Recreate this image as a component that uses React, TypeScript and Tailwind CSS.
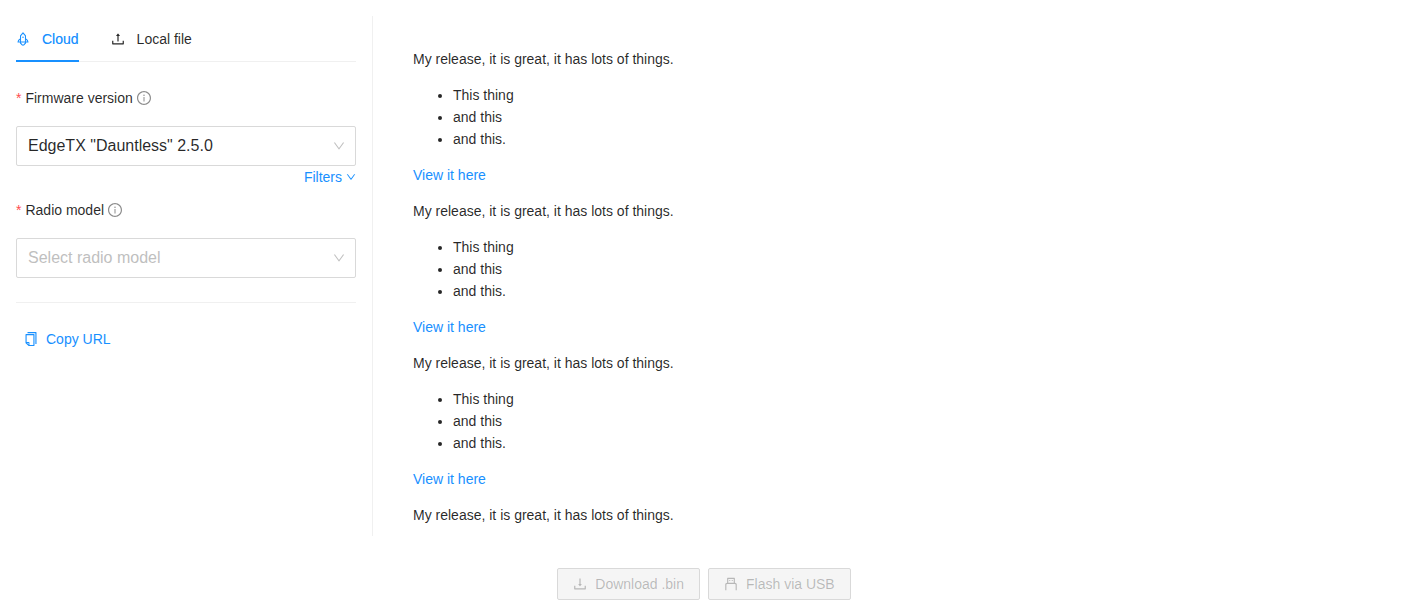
import type { ReactNode } from "react";
import {
  AiOutlineCopy,
  AiOutlineDown,
  AiOutlineDownload,
  AiOutlineInfoCircle,
  AiOutlineRocket,
  AiOutlineUpload,
  AiOutlineUsb,
} from "react-icons/ai";

// Trims the icon set's built-in margin so the glyph fills its box.
const tight = { viewBox: "64 64 896 896" };

function FieldLabel({ children }: { children: ReactNode }) {
  return (
    <label className="flex h-[22px] items-center">
      <span className="mr-1 leading-none text-[#ff4d4f]">*</span>
      {children}
      <AiOutlineInfoCircle {...tight} className="ml-1 size-3.5 text-black/45" />
    </label>
  );
}

function SelectBox({ value, placeholder }: { value?: string; placeholder?: string }) {
  return (
    <div className="flex h-10 items-center justify-between rounded-[2px] border border-[#d9d9d9] bg-white pr-2.5 pl-[11px] text-base">
      <span className={value ? "" : "text-[#bfbfbf]"}>{value ?? placeholder}</span>
      <AiOutlineDown {...tight} className="size-3 text-black/25" />
    </div>
  );
}

function ActionButton({ icon, children }: { icon: ReactNode; children: ReactNode }) {
  return (
    <button
      disabled
      className="flex h-8 items-center gap-2 rounded-[2px] border border-[#d9d9d9] bg-[#f5f5f5] px-[15px] text-black/25"
    >
      {icon}
      <span>{children}</span>
    </button>
  );
}

function ReleaseIntro() {
  return <p className="mb-3.5">My release, it is great, it has lots of things.</p>;
}

function ReleaseNote() {
  return (
    <>
      <ReleaseIntro />
      <ul className="mb-3.5 list-disc pl-10">
        <li>This thing</li>
        <li>and this</li>
        <li>and this.</li>
      </ul>
      <p className="mb-3.5">
        <a href="#" className="text-[#1890ff]">View it here</a>
      </p>
    </>
  );
}

export default function App() {
  return (
    <div className="flex h-[600px] flex-col overflow-hidden bg-white pt-4 font-['Liberation_Sans',Arial,sans-serif] text-sm leading-[22px] text-black/85">
      <main className="flex h-[520px] shrink-0 pl-4">
        <section className="w-[340px] shrink-0">
          <nav className="flex h-[46px] gap-8 border-b border-[#f0f0f0]">
            <button className="flex h-[46px] items-center gap-3 border-b-2 border-[#1890ff] pt-0.5 text-[#1890ff] [text-shadow:0_0_0.25px_rgba(24,144,255,0.5)]">
              <AiOutlineRocket {...tight} className="size-3.5" />
              <span>Cloud</span>
            </button>
            <button className="flex h-[46px] items-center gap-3">
              <AiOutlineUpload {...tight} className="size-3.5" />
              <span>Local file</span>
            </button>
          </nav>
          <div className="mt-[25px]">
            <FieldLabel>Firmware version</FieldLabel>
            <div className="mt-[17px]">
              <SelectBox value={'EdgeTX "Dauntless" 2.5.0'} />
            </div>
            <a href="#" className="flex items-center justify-end gap-1 text-[#1890ff]">
              Filters
              <AiOutlineDown {...tight} className="size-2.5" />
            </a>
          </div>
          <div className="mt-[11px]">
            <FieldLabel>Radio model</FieldLabel>
            <div className="mt-[17px]">
              <SelectBox placeholder="Select radio model" />
            </div>
          </div>
          <hr className="mt-6 border-[#f0f0f0]" />
          <button className="mt-5 flex h-8 items-center gap-2 px-2 text-[#1890ff]">
            <AiOutlineCopy {...tight} className="size-3.5" />
            Copy URL
          </button>
        </section>
        <article className="ml-4 flex-1 overflow-hidden border-l border-[#f0f0f0] pt-8 pl-10">
          <ReleaseNote />
          <ReleaseNote />
          <ReleaseNote />
          <ReleaseIntro />
        </article>
      </main>
      <footer className="mt-8 flex justify-center gap-2">
        <ActionButton icon={<AiOutlineDownload {...tight} className="size-3.5" />}>Download .bin</ActionButton>
        <ActionButton icon={<AiOutlineUsb {...tight} className="size-3.5" />}>Flash via USB</ActionButton>
      </footer>
    </div>
  );
}
